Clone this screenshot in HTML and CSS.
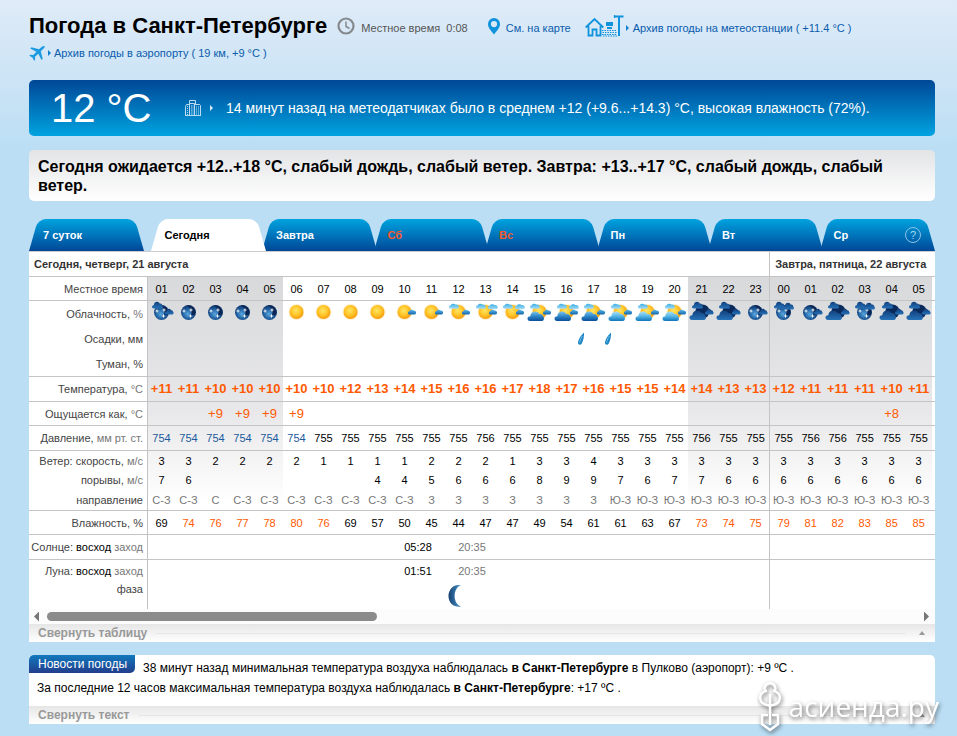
FILE: index.html
```html
<!DOCTYPE html>
<html lang="ru">
<head>
<meta charset="utf-8">
<title>Погода в Санкт-Петербурге</title>
<link rel="stylesheet" href="styles.css">
</head>
<body>
<svg class="defs" aria-hidden="true">
  <defs>
    <radialGradient id="gSun" cx=".45" cy=".4" r=".6"><stop offset="0" stop-color="#ffe566"/><stop offset=".55" stop-color="#ffc629"/><stop offset="1" stop-color="#f79a10"/></radialGradient>
    <radialGradient id="gMoon" cx=".45" cy=".6" r=".65"><stop offset="0" stop-color="#5aa8e0"/><stop offset=".5" stop-color="#1f5f9f"/><stop offset="1" stop-color="#0b2a5c"/></radialGradient>
    <linearGradient id="gLight" x2="0" y2="1"><stop offset="0" stop-color="#3fb0e6"/><stop offset="1" stop-color="#a5dcf5"/></linearGradient>
    <linearGradient id="gMid" x2="0" y2="1"><stop offset="0" stop-color="#5cb4e4"/><stop offset="1" stop-color="#1268ae"/></linearGradient>
    <linearGradient id="gBig" x2="0" y2="1"><stop offset="0" stop-color="#7cc6ee"/><stop offset=".5" stop-color="#2f86c8"/><stop offset="1" stop-color="#0a4f9a"/></linearGradient>
    <linearGradient id="gSoft" x2="0" y2="1"><stop offset="0" stop-color="#a9e0f7"/><stop offset=".5" stop-color="#58b6e6"/><stop offset="1" stop-color="#0f76bd"/></linearGradient>
    <linearGradient id="gNight" x2="0" y2="1"><stop offset="0" stop-color="#12407c"/><stop offset="1" stop-color="#2672b8"/></linearGradient>
    <linearGradient id="gPhase"><stop offset="0" stop-color="#16406f"/><stop offset="1" stop-color="#4b9ad2"/></linearGradient>
    <path id="cloud" d="M2.500 10C.8 10 0 9 0 7.600 0 6 1.300 5.200 2.800 5.200 3 2.200 5 .5 7.600.5c2 0 3.500 1 4.200 2.600 2.200-.4 3.700 1 3.700 2.500C17 6 17 10 14.500 10z"/>
    <path id="puff" d="M1.500 4.500C-.5 4.500-.5 1.500 1.500 1.500 2.200 0 5 0 5.800 1 7.500.8 8.500 2 8.500 2.800 8.500 4 7.800 4.500 7 4.500z"/>
    <g id="star"><path d="M0-2.400.5-.5 2.400 0 .5.5 0 2.400-.5.5-2.400 0-.5-.5z" fill="#fff"/></g>
    <g id="disc"><circle cx="13.500" cy="11" r="8" fill="#ffd977" opacity=".35"/><circle cx="13.500" cy="11" r="7" fill="url(#gSun)"/></g>
    <g id="globe"><circle cx="13.500" cy="11.500" r="7.500" fill="url(#gMoon)"/><path d="M12 4.500a7 7 0 0 1 8 9 8 8 0 0 1-4 1 8 8 0 0 0-4-10z" fill="#0a2554"/><use href="#star" x="9" y="10"/><use href="#star" x="16" y="9"/><use href="#star" x="15.500" y="15"/></g>
    <g id="tl"><use href="#puff" transform="translate(4 2.500) scale(1.150)" fill="url(#gLight)"/></g>
    <g id="tr"><use href="#puff" transform="translate(16 3) scale(1.150)" fill="url(#gLight)"/></g>
    <g id="rt"><use href="#puff" transform="translate(17 8.500) scale(.95 1.100)" fill="url(#gMid)"/></g>
    <g id="ntl"><use href="#cloud" transform="translate(4 .5) scale(.66 .7)" fill="url(#gNight)"/></g>
    <g id="nrt"><use href="#cloud" transform="translate(17 7.500) scale(.52 .6)" fill="url(#gNight)"/></g>
    <g id="nbig"><use href="#cloud" transform="translate(1.500 9)" fill="url(#gNight)"/></g>
    <symbol id="sun" viewBox="0 0 27 24"><use href="#disc"/></symbol>
    <symbol id="sun-r" viewBox="0 0 27 24"><use href="#disc"/><use href="#rt"/></symbol>
    <symbol id="sun-lr" viewBox="0 0 27 24"><use href="#disc"/><use href="#tl"/><use href="#rt"/></symbol>
    <symbol id="sun-ltr" viewBox="0 0 27 24"><use href="#disc"/><use href="#tl"/><use href="#rt"/><use href="#tr"/></symbol>
    <symbol id="sun-big" viewBox="0 0 27 24"><use href="#disc"/><use href="#tl"/><use href="#rt"/><use href="#cloud" x="1.500" y="10" fill="url(#gBig)"/></symbol>
    <symbol id="sun-all" viewBox="0 0 27 24"><use href="#disc"/><use href="#tl"/><use href="#rt"/><use href="#tr"/><use href="#cloud" x="1.500" y="10" fill="url(#gBig)"/></symbol>
    <symbol id="sun-soft" viewBox="0 0 27 24"><use href="#disc"/><use href="#tl"/><use href="#rt"/><use href="#cloud" x="1.500" y="10" fill="url(#gSoft)"/></symbol>
    <symbol id="moon" viewBox="0 0 27 24"><use href="#globe"/></symbol>
    <symbol id="moon-r" viewBox="0 0 27 24"><use href="#globe"/><use href="#nrt"/></symbol>
    <symbol id="moon-lr" viewBox="0 0 27 24"><use href="#globe"/><use href="#ntl"/><use href="#nrt"/></symbol>
    <symbol id="moon-lt" viewBox="0 0 27 24"><use href="#globe"/><use href="#ntl"/><use href="#ntl" x="9" y="1"/></symbol>
    <symbol id="moon-big" viewBox="0 0 27 24"><circle cx="14.500" cy="10.500" r="7" fill="#0b2a5c"/><use href="#ntl"/><use href="#nrt"/><use href="#nbig"/></symbol>
    <symbol id="drop" viewBox="0 0 9 14"><path d="M8 .5C8.200 4 7.500 8 5.800 11.500 4.500 13.500 1.500 13 2 10 2.800 6.500 5 3.500 8 .5z" fill="#1f86c4"/><path d="M6.500 4C5 6 4 8 3.800 10.500" stroke="#6fc0e8" fill="none"/></symbol>
  </defs>
</svg>

<main class="page">
  <header class="head">
    <div class="head-row">
      <h1>Погода в Санкт-Петербурге</h1>
      <div class="clock">
        <svg width="18" height="18" viewBox="0 0 18 18" fill="none" stroke="#85898d"><circle cx="9" cy="9" r="7.500" stroke-width="2.200"/><path d="M9 4.500V9.500L12.500 11.500" stroke-width="1.500"/></svg>
        <span>Местное время&nbsp; 0:08</span>
      </div>
      <a class="map" href="#map">
        <svg width="12" height="17" viewBox="0 0 12 17"><path fill="#0f93dc" fill-rule="evenodd" d="M6 0a6 6 0 0 1 6 6c0 3.800-3 6.500-6 10.500C3 12.500 0 9.800 0 6a6 6 0 0 1 6-6zm0 3a3.100 3.100 0 1 0 0 6.200A3.100 3.100 0 0 0 6 3z"/></svg>
        <span>См. на карте</span>
      </a>
      <a class="station" href="#station">
        <svg width="39" height="22" viewBox="0 0 39 22" fill="none" stroke="#0f93dc"><path stroke-width="1.800" d="M.7 12.500 9.500 4l8.800 8.500M3.500 11v9.500h4V14.500h4v6h4V11"/><path stroke-width="2" d="M34 1v20M30 1.500h8.500"/><path stroke-width="1.200" d="M29.500 0v3"/><path fill="#0f93dc" stroke="none" d="M21 7h7v4h-7zM22 12h5v2h-5z"/><path stroke-width="1" stroke-dasharray="1.500 1" d="M17 15.500h15M17.500 17.500h15M17 19.500h15M18 21h14"/></svg>
        <i class="tick"></i><span>Архив погоды на метеостанции ( +11.4 °C )</span>
      </a>
    </div>
    <a class="airport" href="#airport">
      <svg width="16" height="15" viewBox="0 0 16 15" fill="#1c9be0"><path d="M15.600.3C14.500-.4 13 .6 12 1.500L10 3.300 2.500 1.200 1.200 2.400 7.400 5.800 4.300 9 1.300 8.700.3 9.700 3.400 11.500 5.200 14.700 6.200 13.700 6 10.700 9.300 7.700 12.500 14 13.700 12.800 11.800 5.200 13.800 3.300C14.800 2.300 16 1.200 15.600.3z"/></svg>
      <i class="tick"></i><span>Архив погоды в аэропорту ( 19 км, +9 °C )</span>
    </a>
  </header>

  <section class="now">
    <div class="now-temp">12 °C</div>
    <a class="now-info" href="#sensors">
      <svg width="16" height="16" viewBox="0 0 16 16" fill="none" stroke="#b9dcf3"><path d="M4.500 4V.5h6V4M.5 15.500V6.500l1-2h3v11M4.500 15.500V3.500h5v12M9.500 4.500h5l1 1v10M0 15.500h16"/><path stroke-dasharray="1 1" d="M2.500 6v9M6.500 5.500v10M8 5.500v10M11.500 6.500v9M13.500 6.500v9"/></svg>
      <i class="tick"></i><span>14 минут назад на метеодатчиках было в среднем +12 (+9.6...+14.3) °C, высокая влажность (72%).</span>
    </a>
  </section>

  <p class="summary">Сегодня ожидается +12..+18 °C, слабый дождь, слабый ветер. Завтра: +13..+17 °C, слабый дождь, слабый ветер.</p>

  <nav class="tabs">
    <a href="#week"><span>7 суток</span></a>
    <a href="#today" class="active"><span>Сегодня</span></a>
    <a href="#tomorrow"><span>Завтра</span></a>
    <a href="#sat" class="weekend"><span>Сб</span></a>
    <a href="#sun-day" class="weekend"><span>Вс</span></a>
    <a href="#mon"><span>Пн</span></a>
    <a href="#tue"><span>Вт</span></a>
    <a href="#wed"><span>Ср</span><b class="help">?</b></a>
  </nav>

  <section class="panel">
    <div class="scroll">
    <table class="forecast">
      <colgroup><col class="c-label"><col span="23" class="c-hour"><col class="c-first"><col span="5" class="c-hour"><col></colgroup>
      <tr class="dates"><th colspan="24">Сегодня, четверг, 21 августа</th><th colspan="7" class="d">Завтра, пятница, 22 августа</th></tr>
      <tr class="time line"><th>Местное время</th><td>01</td><td>02</td><td>03</td><td>04</td><td>05</td><td>06</td><td>07</td><td>08</td><td>09</td><td>10</td><td>11</td><td>12</td><td>13</td><td>14</td><td>15</td><td>16</td><td>17</td><td>18</td><td>19</td><td>20</td><td>21</td><td>22</td><td>23</td><td class="d">00</td><td>01</td><td>02</td><td>03</td><td>04</td><td>05</td><td></td></tr>
      <tr class="clouds"><th>Облачность, <i>%</i></th><td><svg><use href="#moon-lr"/></svg></td><td><svg><use href="#moon"/></svg></td><td><svg><use href="#moon"/></svg></td><td><svg><use href="#moon"/></svg></td><td><svg><use href="#moon"/></svg></td><td><svg><use href="#sun"/></svg></td><td><svg><use href="#sun"/></svg></td><td><svg><use href="#sun"/></svg></td><td><svg><use href="#sun"/></svg></td><td><svg><use href="#sun-r"/></svg></td><td><svg><use href="#sun-r"/></svg></td><td><svg><use href="#sun-lr"/></svg></td><td><svg><use href="#sun-ltr"/></svg></td><td><svg><use href="#sun-ltr"/></svg></td><td><svg><use href="#sun-big"/></svg></td><td><svg><use href="#sun-all"/></svg></td><td><svg><use href="#sun-big"/></svg></td><td><svg><use href="#sun-soft"/></svg></td><td><svg><use href="#sun-soft"/></svg></td><td><svg><use href="#sun-soft"/></svg></td><td><svg><use href="#moon-big"/></svg></td><td><svg><use href="#moon-big"/></svg></td><td><svg><use href="#moon-r"/></svg></td><td class="d"><svg><use href="#moon-lt"/></svg></td><td><svg><use href="#moon-r"/></svg></td><td><svg><use href="#moon-big"/></svg></td><td><svg><use href="#moon-lt"/></svg></td><td><svg><use href="#moon-big"/></svg></td><td><svg><use href="#moon-big"/></svg></td><td></td></tr>
      <tr class="rain"><th>Осадки, мм</th><td colspan="15"></td><td></td><td><svg><use href="#drop"/></svg></td><td><svg><use href="#drop"/></svg></td><td colspan="5"></td><td class="d" colspan="7"></td></tr>
      <tr class="fog line"><th>Туман, %</th><td colspan="23"></td><td class="d" colspan="7"></td></tr>
      <tr class="temp line"><th>Температура, <i>°C</i></th><td>+11</td><td>+11</td><td>+10</td><td>+10</td><td>+10</td><td>+10</td><td>+10</td><td>+12</td><td>+13</td><td>+14</td><td>+15</td><td>+16</td><td>+16</td><td>+17</td><td>+18</td><td>+17</td><td>+16</td><td>+15</td><td>+15</td><td>+14</td><td>+14</td><td>+13</td><td>+13</td><td class="d">+12</td><td>+11</td><td>+11</td><td>+11</td><td>+10</td><td>+11</td><td></td></tr>
      <tr class="feels line"><th>Ощущается как, <i>°C</i></th><td></td><td></td><td>+9</td><td>+9</td><td>+9</td><td>+9</td><td colspan="17"></td><td class="d"></td><td></td><td></td><td></td><td>+8</td><td></td><td></td></tr>
      <tr class="press line"><th>Давление, <i>мм рт. ст.</i></th><td class="low">754</td><td class="low">754</td><td class="low">754</td><td class="low">754</td><td class="low">754</td><td class="low">754</td><td>755</td><td>755</td><td>755</td><td>755</td><td>755</td><td>755</td><td>756</td><td>755</td><td>755</td><td>755</td><td>755</td><td>755</td><td>755</td><td>755</td><td>756</td><td>755</td><td>755</td><td class="d">755</td><td>756</td><td>756</td><td>755</td><td>755</td><td>755</td><td></td></tr>
      <tr class="wind"><th>Ветер: скорость, <i>м/с</i></th><td>3</td><td>3</td><td>2</td><td>2</td><td>2</td><td>2</td><td>1</td><td>1</td><td>1</td><td>1</td><td>2</td><td>2</td><td>2</td><td>1</td><td>3</td><td>3</td><td>4</td><td>3</td><td>3</td><td>3</td><td>3</td><td>3</td><td>3</td><td class="d">3</td><td>3</td><td>3</td><td>3</td><td>3</td><td>3</td><td></td></tr>
      <tr class="wind"><th>порывы, <i>м/с</i></th><td>7</td><td>6</td><td></td><td></td><td></td><td></td><td></td><td></td><td>4</td><td>4</td><td>5</td><td>6</td><td>6</td><td>6</td><td>8</td><td>9</td><td>9</td><td>7</td><td>6</td><td>7</td><td>7</td><td>6</td><td>6</td><td class="d">6</td><td>6</td><td>6</td><td>6</td><td>6</td><td>6</td><td></td></tr>
      <tr class="dir line"><th>направление</th><td>С-З</td><td>С-З</td><td>С</td><td>С-З</td><td>С-З</td><td>С-З</td><td>С-З</td><td>С-З</td><td>С-З</td><td>С-З</td><td>З</td><td>З</td><td>З</td><td>З</td><td>З</td><td>З</td><td>З</td><td>Ю-З</td><td>Ю-З</td><td>Ю-З</td><td>Ю-З</td><td>Ю-З</td><td>Ю-З</td><td class="d">Ю-З</td><td>Ю-З</td><td>Ю-З</td><td>Ю-З</td><td>Ю-З</td><td>Ю-З</td><td></td></tr>
      <tr class="hum line"><th>Влажность, %</th><td>69</td><td class="hi">74</td><td class="hi">76</td><td class="hi">77</td><td class="hi">78</td><td class="hi">80</td><td class="hi">76</td><td>69</td><td>57</td><td>50</td><td>45</td><td>44</td><td>47</td><td>47</td><td>49</td><td>54</td><td>61</td><td>61</td><td>63</td><td>67</td><td class="hi">73</td><td class="hi">74</td><td class="hi">75</td><td class="hi d">79</td><td class="hi">81</td><td class="hi">82</td><td class="hi">83</td><td class="hi">85</td><td class="hi">85</td><td></td></tr>
      <tr class="sunrise line"><th>Солнце: <b>восход</b> <i>заход</i></th><td colspan="9"></td><td colspan="2">05:28</td><td colspan="2" class="set">20:35</td><td colspan="10"></td><td class="d" colspan="7"></td></tr>
      <tr class="moonrise"><th>Луна: <b>восход</b> <i>заход</i></th><td colspan="9"></td><td colspan="2">01:51</td><td colspan="2" class="set">20:35</td><td colspan="10"></td><td class="d" colspan="7"></td></tr>
      <tr class="phase"><th>фаза</th><td colspan="11"></td><td><svg viewBox="0 0 22 22"><path d="M13 0C3-1 .5 7 .5 11S3 23 13 21.500C4.500 18.500 4.500 3.500 13 0z" fill="url(#gPhase)"/></svg></td><td colspan="11"></td><td class="d" colspan="7"></td></tr>
    </table>
    </div>
    <div class="bar">
      <button class="arrow left" aria-label="Назад"></button>
      <div class="track"><div class="thumb"></div></div>
      <button class="arrow right" aria-label="Вперёд"></button>
    </div>
    <button class="fold"><span>Свернуть таблицу</span><i class="rule"></i><i class="up"></i></button>
  </section>

  <section class="news">
    <h2>Новости погоды</h2>
    <p>38 минут назад минимальная температура воздуха наблюдалась <b>в Санкт-Петербурге</b> в Пулково (аэропорт): +9 ºC .</p>
    <p>За последние 12 часов максимальная температура воздуха наблюдалась <b>в Санкт-Петербурге</b>: +17 ºC .</p>
    <button class="fold"><span>Свернуть текст</span><i class="rule"></i><i class="up"></i></button>
    <div class="mark">
      <svg width="24" height="52" viewBox="0 0 24 52" fill="none" stroke="#fff" stroke-width="2.500"><path d="M7 11a5.500 5.500 0 1 1 10 0M9 10.500C-1 13 0 24 11 25.500M15 10.500C25 13 24 24 13 25.500M12 14v31M10 35H4v9l8 6 8-6v-9h-6"/></svg>
      <span>асиенда.ру</span>
    </div>
  </section>
</main>
</body>
</html>
```
FILE: styles.css
```css
* { box-sizing: border-box; }

body {
  margin: 0;
  min-height: 100vh;
  background: #bbdef4 linear-gradient(#dfebf8, #bbdef4) 0 0 / 100% 150px no-repeat;
  font: 11px/14px "Liberation Sans", Arial, sans-serif;
  color: #000;
}

a { color: #0b5cad; text-decoration: none; }
button { border: 0; padding: 0; background: none; font: inherit; cursor: pointer; }
i { font-style: normal; }
.defs { position: absolute; width: 0; height: 0; }

.page { padding: 10px 22px 12px 29px; }

/* header */
.head { height: 70px; }
.head-row { display: flex; align-items: center; height: 32px; }
h1 { margin: 0; font-size: 22px; line-height: 28px; white-space: nowrap; }
.clock, .map, .station, .airport { display: flex; align-items: center; white-space: nowrap; }
.head-row span { padding-top: 4px; }
.clock { gap: 6px; margin-left: 10px; color: #555; }
.map { gap: 6px; margin-left: 20px; }
.station { margin-left: 14px; }
.tick {
  width: 0;
  height: 0;
  border: 3px solid transparent;
  border-left-color: #0f7fd0;
  border-right: 0;
}
.station .tick { margin: 4px 4px 0 2px; }
.airport { height: 22px; }
.airport .tick { margin: 0 3px; }

/* current weather */
.now {
  display: flex;
  align-items: center;
  height: 56px;
  padding-left: 22px;
  border-radius: 5px;
  background: linear-gradient(#004796, #00a3e0);
  color: #fff;
}
.now-temp { width: 134px; font-size: 40px; line-height: 56px; white-space: nowrap; }
.now-info { display: flex; align-items: center; color: #fff; font-size: 14px; line-height: 18px; }
.now-info .tick { margin: 0 13px 0 9px; border-left-color: #d5ebf8; }

.summary {
  margin: 14px 0 18px;
  padding: 7px 9px 6px;
  border-radius: 5px;
  background: linear-gradient(#e3e4e6, #fff);
  font-size: 16px;
  line-height: 19px;
  font-weight: bold;
}

/* day tabs */
.tabs { display: flex; height: 32px; }
.tabs a {
  position: relative;
  flex: 1;
  display: flex;
  align-items: center;
  justify-content: space-between;
  margin-left: -4px;
  padding: 0 14px;
  color: #fff;
  font-weight: bold;
}
.tabs a:first-child { margin-left: 0; }
.tabs a.active { z-index: 1; margin-left: 6px; color: #000; }
.tabs a.weekend { color: #f4592a; }
.tabs a::before, .tabs a::after {
  content: "";
  position: absolute;
  top: 0;
  bottom: 0;
  background: linear-gradient(#00a3e0, #004796);
}
.tabs a::before { left: 0; right: 40%; border-top-left-radius: 8px; transform: skewX(-16deg); transform-origin: 0 100%; }
.tabs a::after { right: 0; left: 40%; border-top-right-radius: 8px; transform: skewX(16deg); transform-origin: 100% 100%; }
.tabs a.active::before, .tabs a.active::after { background: #fff; }
.tabs span, .help { position: relative; z-index: 1; }
.help {
  width: 16px;
  height: 16px;
  border: 1px solid #8cc3e8;
  border-radius: 50%;
  color: #a9d4f0;
  font-weight: normal;
  text-align: center;
}

/* hourly table */
.panel { border-top: 1px solid #ccc; background: #fff; }
.scroll { overflow: hidden; }
.forecast {
  width: 100%;
  table-layout: fixed;
  border-spacing: 0;
  background:
    linear-gradient(#d8d9db, #e8e8ea 60%, #fff) 119px 25px / 135px 225px no-repeat,
    linear-gradient(#d8d9db, #e8e8ea 60%, #fff) 659px 25px / 244px 225px no-repeat;
}
.c-label { width: 119px; }
.c-hour { width: 27px; }
.c-first { width: 28px; }
.forecast th, .forecast td { padding: 0; white-space: nowrap; }
.forecast th { padding-right: 4px; border-right: 1px solid #c4c4c4; color: #444; font-weight: normal; text-align: right; }
.forecast td { text-align: center; }
.forecast .d { border-left: 1px solid #c4c4c4; }
.forecast .line > * { border-bottom: 1px solid #c4c4c4; }
.forecast th i { color: #777; }
.forecast th b { color: #000; font-weight: normal; }
.forecast svg { display: block; }
.dates { height: 25px; }
.forecast .dates th { padding: 0 5px; border-right: 0; border-bottom: 1px solid #c4c4c4; color: #333; font-weight: bold; text-align: left; }
.time, .feels, .hum { height: 24px; }
.clouds, .rain, .temp, .press, .sunrise { height: 25px; }
.fog { height: 26px; }
.wind { height: 19px; }
.dir, .moonrise { height: 22px; }
.phase { height: 27px; }
.phase th { vertical-align: top; }
.clouds td { vertical-align: top; }
.clouds svg { width: 27px; height: 24px; }
.rain svg { width: 9px; height: 14px; margin-left: -4px; }
.temp td { color: #ff5a00; font-size: 13px; font-weight: bold; }
.feels td { color: #ff5a00; font-size: 13px; }
.forecast .low { color: #1b5a9c; }
.forecast .hi { color: #ff5a00; }
.dir td, .forecast .set { color: #777; }
.phase svg { width: 22px; height: 22px; margin: 0 auto; }

.bar { display: flex; align-items: center; height: 15px; padding: 0 6px 0 5px; background: #fcfcfc; }
.track { flex: 1; margin: 0 8px; }
.thumb { width: 38%; height: 9px; border-radius: 5px; background: #8b8b8b; }
.arrow { width: 5px; height: 10px; background: #777; }
.arrow.left { clip-path: polygon(0 50%, 100% 0, 100% 100%); }
.arrow.right { clip-path: polygon(100% 50%, 0 0, 0 100%); }

.fold {
  display: flex;
  align-items: center;
  width: 100%;
  height: 18px;
  padding: 0 10px 0 9px;
  background: linear-gradient(#e6e6e6, #fff);
  color: #999;
  font-size: 12px;
  font-weight: bold;
}
.rule { flex: 1; height: 1px; margin: 0 14px 0 9px; background: #e6e6e6; }
.up { border: 3px solid transparent; border-bottom: 4px solid #999; border-top: 0; }

/* news */
.news {
  position: relative;
  margin-top: 13px;
  border-radius: 5px 5px 0 0;
  background: #fff;
  font-size: 12px;
  line-height: 20px;
}
.news h2 {
  float: left;
  margin: 0 8px 0 0;
  padding: 0 8px 0 9px;
  border-radius: 5px 0 5px 0;
  background: linear-gradient(#1279bd, #223d8c);
  color: #fff;
  font-size: 12px;
  line-height: 18px;
  font-weight: normal;
}
.news p { margin: 0; padding: 0 8px; }
.news h2 + p { padding-top: 3px; }
.news .fold { margin-top: 8px; }
.mark {
  position: absolute;
  right: -4px;
  bottom: -8px;
  display: flex;
  align-items: center;
  gap: 7px;
  color: #fff;
  font: 28px/40px "Open Sans", "Noto Sans", sans-serif;
  filter: drop-shadow(1px 2px 2px rgba(0, 0, 0, .55));
}
```
